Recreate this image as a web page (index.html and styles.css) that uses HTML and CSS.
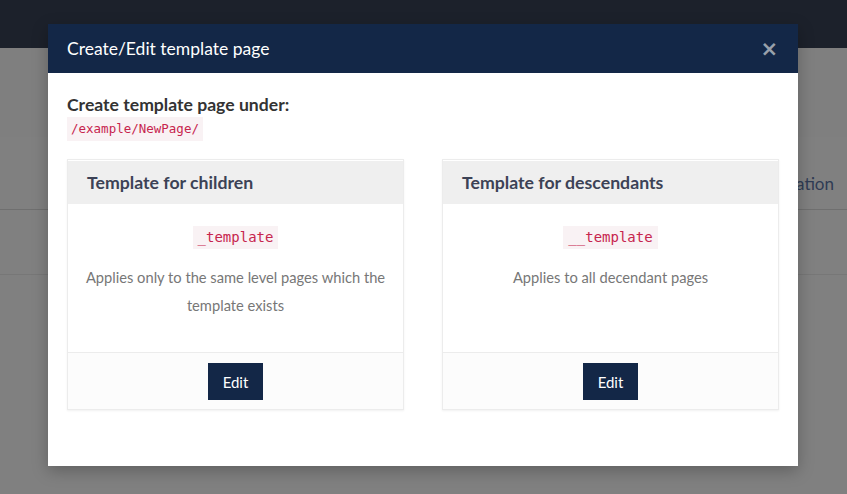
FILE: index.html
```html
<!DOCTYPE html>
<html>
<head>
<meta charset="utf-8">
<link rel="stylesheet" href="styles.css">
</head>
<body>
<div class="page">
  <div class="navbar"></div>
  <div class="hero"></div>
  <div class="tabs"><span class="tab">Documentation</span></div>
  <div class="row"></div>
</div>
<div class="modal">
  <div class="modal-header">
    <span class="modal-title">Create/Edit template page</span>
    <span class="close">&times;</span>
  </div>
  <div class="modal-body">
    <h4 class="under">Create template page under:</h4>
    <code class="path">/example/NewPage/</code>
    <div class="cards">
      <div class="card">
        <div class="card-head">Template for children</div>
        <div class="card-body">
          <code class="tpl">_template</code>
          <p class="desc">Applies only to the same level pages which the template exists</p>
        </div>
        <div class="card-foot"><button class="btn">Edit</button></div>
      </div>
      <div class="card">
        <div class="card-head">Template for descendants</div>
        <div class="card-body">
          <code class="tpl">__template</code>
          <p class="desc">Applies to all decendant pages</p>
        </div>
        <div class="card-foot"><button class="btn">Edit</button></div>
      </div>
    </div>
  </div>
</div>
</body>
</html>
```
FILE: styles.css
```css
* { box-sizing: border-box; }
html, body { margin: 0; padding: 0; }
body {
  width: 847px;
  height: 494px;
  overflow: hidden;
  background: #808080;
  font-family: Lato, "Open Sans", sans-serif;
  position: relative;
}
.page { display: flex; flex-direction: column; }
.navbar { height: 48px; background: #1c212b; }
.hero { height: 89px; background: #7f7f7f; }
.tabs {
  height: 73px;
  border-bottom: 1px solid #6f6f6f;
  background: #808080;
  display: flex;
  justify-content: flex-end;
  align-items: center;
  padding-right: 13px;
}
.tab { color: #2f3b54; font-size: 17px; padding-top: 20px; }
.row { height: 65px; border-bottom: 1px solid #777; }

.modal {
  position: absolute;
  left: 48px;
  top: 24px;
  width: 750px;
  height: 442px;
  background: #fff;
  box-shadow: 0 5px 15px rgba(0,0,0,0.25);
}
.modal-header {
  height: 49px;
  background: #132747;
  display: flex;
  align-items: center;
  justify-content: space-between;
  padding: 0 19px;
}
.modal-title { color: #fff; font-size: 17.5px; }
.close {
  color: #98a0ab;
  font-size: 21px;
  font-weight: 700;
  font-family: "DejaVu Sans", sans-serif;
  line-height: 1;
  margin-top: 1px;
  margin-right: 1px;
}
.modal-body { padding: 19px 19px 0; }
.under {
  margin: 0;
  font-size: 17.6px;
  font-weight: 700;
  color: #333;
  line-height: 25px;
}
.path {
  display: inline-block;
  margin-top: 0;
  font-family: "DejaVu Sans Mono", monospace;
  font-size: 12.5px;
  color: #c7254e;
  background: #f9f2f4;
  padding: 4px 4px 4px;
  line-height: 16px;
}
.cards {
  display: grid;
  grid-template-columns: 337px 337px;
  gap: 38px;
  margin-top: 18px;
}
.card {
  border: 1px solid #ececec;
  box-shadow: 0 1px 2px rgba(0,0,0,0.06);
  display: flex;
  flex-direction: column;
  height: 251px;
}
.card-head {
  height: 44px;
  background: #efefef;
  border-top: 1px solid #fff;
  padding: 0 19px;
  display: flex;
  align-items: center;
  font-size: 17.7px;
  font-weight: 700;
  color: #3c4256;
}
.card-body {
  flex: 1;
  text-align: center;
  padding: 22px 14px 0;
}
.tpl {
  display: inline-block;
  font-family: "DejaVu Sans Mono", monospace;
  font-size: 14px;
  color: #c7254e;
  background: #f9f2f4;
  padding: 3px 5px;
  line-height: 17px;
}
.desc {
  margin: 14px 0 0;
  color: #777;
  font-size: 14.7px;
  line-height: 28px;
}
.card-foot {
  height: 57px;
  border-top: 1px solid #ececec;
  background: #fcfcfc;
  display: flex;
  justify-content: center;
  padding-top: 10px;
}
.btn {
  height: 37px;
  width: 55px;
  border: 0;
  background: #132747;
  color: #fff;
  font-family: Lato, sans-serif;
  font-size: 15px;
  padding: 0;
}
```
